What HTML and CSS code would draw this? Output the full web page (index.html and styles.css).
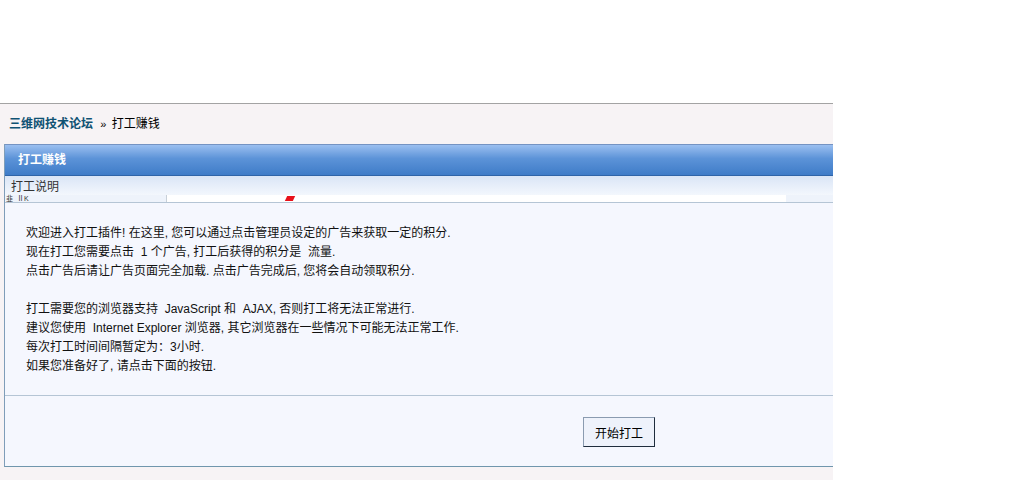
FILE: index.html
```html
<!DOCTYPE html>
<html lang="zh-CN">
<head>
    <meta charset="UTF-8">
    <title>打工赚钱 - 三维网技术论坛</title>
    <link rel="stylesheet" href="styles.css">
</head>
<body>
    <div class="top"></div>

    <div class="wrap">
        <div class="nav">
            <a href="#" class="nav-home">三维网技术论坛</a>
            <span class="nav-sep">&raquo;</span>
            <span>打工赚钱</span>
        </div>

        <div class="box">
            <div class="box-head">打工赚钱</div>
            <div class="box-sub">打工说明</div>
            <div class="box-strip">
                <div class="strip-left">韭 &nbsp;ⅡK</div>
                <div class="strip-mid"><span class="strip-mark"></span></div>
            </div>

            <div class="box-body">
                <p>欢迎进入打工插件! 在这里, 您可以通过点击管理员设定的广告来获取一定的积分.</p>
                <p>现在打工您需要点击 &nbsp;1 个广告, 打工后获得的积分是 &nbsp;流量.</p>
                <p>点击广告后请让广告页面完全加载. 点击广告完成后, 您将会自动领取积分.</p>
                <p>&nbsp;</p>
                <p>打工需要您的浏览器支持 &nbsp;JavaScript 和 &nbsp;AJAX, 否则打工将无法正常进行.</p>
                <p>建议您使用 &nbsp;Internet Explorer 浏览器, 其它浏览器在一些情况下可能无法正常工作.</p>
                <p>每次打工时间间隔暂定为：3小时.</p>
                <p>如果您准备好了, 请点击下面的按钮.</p>
            </div>

            <div class="box-foot">
                <button class="btn">开始打工</button>
            </div>
        </div>
        <div class="wrap-bottom"></div>
    </div>
</body>
</html>
```

FILE: styles.css
```css
body {
    margin: 0;
    font-family: "Liberation Sans", "Noto Sans CJK SC", sans-serif;
    font-size: 12px;
    color: #000;
    background-color: #fff;
}

.top {
    height: 103px;
}

.wrap {
    width: 833px;
    border-top: 1px solid #a3a3a3;
    background-color: #f7f3f5;
}

.nav {
    height: 40px;
    line-height: 41px;
    padding-left: 9px;
}

.nav-home {
    color: #0f5273;
    font-weight: bold;
    text-decoration: none;
}

.nav-sep {
    margin: 0 2px 0 4px;
    font-size: 11px;
}

.box {
    margin-left: 4px;
    border-left: 1px solid #7f9db9;
    border-bottom: 1px solid #7096ad;
    background-color: #f5f7fe;
}

.box-head {
    height: 30px;
    line-height: 30px;
    padding-left: 13px;
    border-top: 1px solid #7593c2;
    border-bottom: 1px solid #2f64a8;
    background: linear-gradient(#9bbff0, #5c93d8 45%, #3f7cc8);
    color: #fff;
    font-weight: bold;
}

.box-sub {
    height: 19px;
    line-height: 23px;
    padding-left: 6px;
    color: #333;
    background: linear-gradient(#dae5f6, #f3f7fd);
    overflow: hidden;
}

.box-strip {
    display: flex;
    height: 7px;
    border-bottom: 1px solid #b5c5d5;
    background-color: #eef3fb;
}

.strip-left {
    width: 160px;
    padding-left: 1px;
    line-height: 7px;
    font-size: 7px;
    color: #333;
}

.strip-mid {
    width: 619px;
    border-left: 1px solid #c8d0d8;
    background-color: #fff;
}

.strip-mark {
    display: inline-block;
    margin: 1px 0 0 119px;
    width: 8px;
    height: 5px;
    background-color: #e8101a;
    transform: skewX(-25deg);
    vertical-align: top;
}

.box-body {
    padding: 21px 0 19px 21px;
    border-bottom: 1px solid #b5c5d5;
}

.box-body p {
    margin: 0;
    line-height: 19px;
    color: #111;
}

.box-foot {
    height: 70px;
    padding-left: 578px;
    display: flex;
    align-items: center;
}

.btn {
    width: 72px;
    height: 30px;
    padding: 0;
    font-family: "Liberation Sans", "Noto Sans CJK SC", sans-serif;
    font-size: 12px;
    color: #000;
    background-color: #eef2fb;
    border: 1px solid;
    border-color: #8a9bb0 #1f2d3d #1f2d3d #8a9bb0;
    margin-top: 2px;
}

.wrap-bottom {
    height: 13px;
}
```
